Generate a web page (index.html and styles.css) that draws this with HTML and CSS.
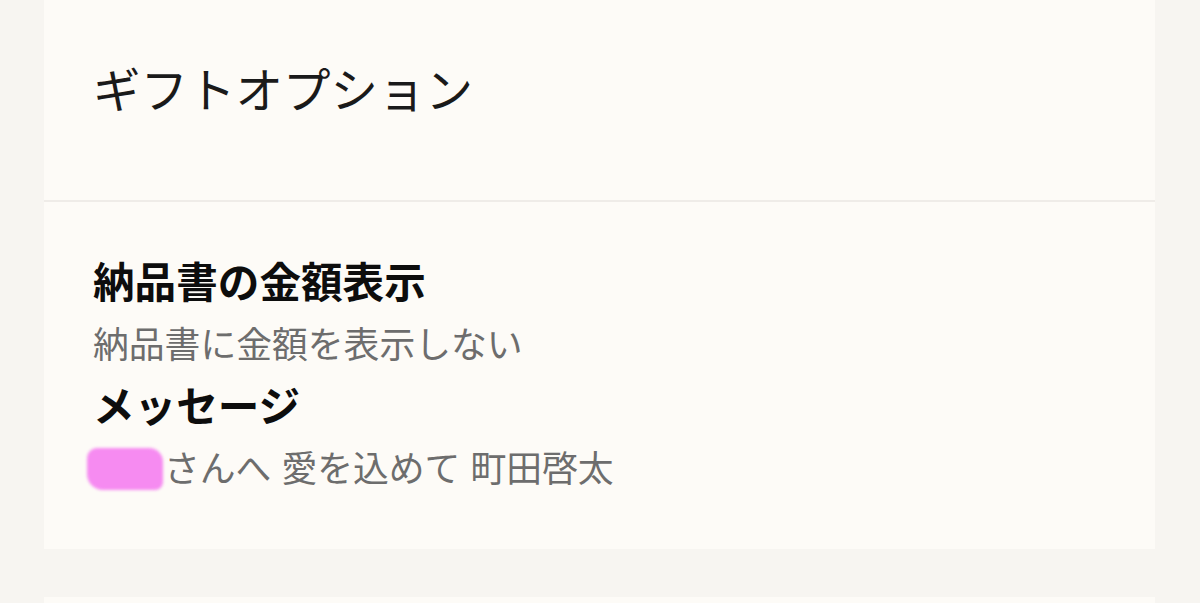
FILE: index.html
```html
<!DOCTYPE html>
<html lang="ja">
<head>
  <meta charset="UTF-8">
  <title>ギフトオプション</title>
  <link rel="stylesheet" href="styles.css">
</head>
<body>
  <div class="page">
    <div class="card">
      <div class="card-head">
        <h1>ギフトオプション</h1>
      </div>
      <div class="card-body">
        <div class="item">
          <h2>納品書の金額表示</h2>
          <p>納品書に金額を表示しない</p>
        </div>
        <div class="item">
          <h2>メッセージ</h2>
          <p class="message"><span class="blur"></span>さんへ 愛を込めて 町田啓太</p>
        </div>
      </div>
    </div>
    <div class="card card-next"></div>
  </div>
</body>
</html>
```

FILE: styles.css
```css
body {
    margin: 0;
    background: #f7f5f1;
    font-family: "Noto Sans CJK JP", "Noto Sans", sans-serif;
    color: #111;
}
.page {
    padding: 0 45px 0 44px;
    height: 603px;
    overflow: hidden;
}
.card {
    background: #fdfbf7;
}
.card-head {
    height: 202px;
    padding: 0 49px;
    box-sizing: border-box;
    border-bottom: 2px solid #efece8;
}
.card-head h1 {
    margin: 0;
    padding-top: 56px;
    font-size: 47.5px;
    font-weight: 400;
    line-height: 64px;
    color: #1a1a1a;
}
.card-body {
    padding: 47px 49px 52px;
}
.item h2 {
    margin: 0;
    font-size: 41.6px;
    font-weight: 700;
    line-height: 62px;
    color: #0d0d0d;
}
.item p {
    margin: 0;
    font-size: 35.8px;
    line-height: 62px;
    color: #6d6d6d;
}
.item .message {
    word-spacing: 2px;
}
.blur {
    display: inline-block;
    width: 76px;
    height: 42px;
    margin-left: -6px;
    margin-right: 1px;
    vertical-align: -8px;
    background: #f68bf1;
    border-radius: 10px 14px 8px 16px;
    filter: blur(1.5px);
}
.card-next {
    margin-top: 48px;
    height: 40px;
}
```
